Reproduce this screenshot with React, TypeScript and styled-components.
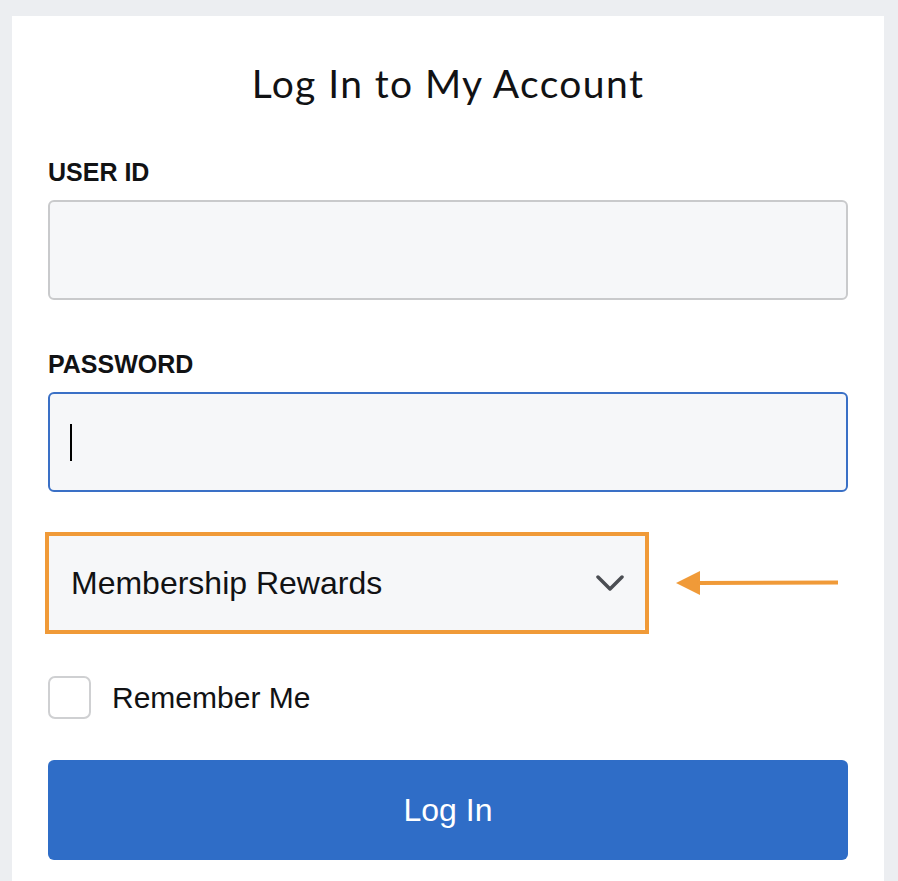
import styled, { createGlobalStyle } from 'styled-components';

const GlobalStyle = createGlobalStyle`
   html, body {
      margin: 0;
      padding: 0;
      background: #eceef1;
      overflow: hidden;
   }
   * {
      box-sizing: border-box;
   }
`;

const color = {
   text: '#111214',
   field: '#f6f7f9',
   fieldBorder: '#c9cacc',
   focus: '#3a70c6',
   button: '#2f6dc7',
   orange: '#f09a38',
   chevron: '#4b4e53',
};

const sans = `"Liberation Sans", Arial, Helvetica, sans-serif`;

const Page = styled.div`
   padding: 16px 14px 0 12px;
   min-height: 881px;
`;

const Card = styled.main`
   background: #ffffff;
   min-height: 865px;
   padding: 43px 36px 40px;
   display: flex;
   flex-direction: column;
`;

const Title = styled.h1`
   margin: 0;
   font-family: Lato, "Open Sans", sans-serif;
   font-weight: 400;
   font-size: 39px;
   letter-spacing: 1.4px;
   line-height: 48px;
   text-align: center;
   color: ${color.text};
`;

const Label = styled.label<{ $top: number }>`
   display: block;
   margin-top: ${(p) => p.$top}px;
   margin-bottom: 13px;
   font-family: ${sans};
   font-weight: 700;
   font-size: 25px;
   line-height: 30px;
   color: ${color.text};
`;

const Field = styled.div<{ $focused?: boolean }>`
   height: 100px;
   border-radius: 6px;
   background: ${color.field};
   border: 2px solid ${(p) => (p.$focused ? color.focus : color.fieldBorder)};
   display: flex;
   align-items: center;
   padding-left: 20px;
`;

const Caret = styled.span`
   width: 2px;
   height: 37px;
   background: #000;
`;

const SelectRow = styled.div`
   margin-top: 40px;
   display: flex;
   align-items: center;
   gap: 27px;
`;

const Highlight = styled.div`
   margin-left: -3px;
   width: 604px;
   height: 102px;
   border: 4px solid ${color.orange};
`;

const Select = styled.div`
   height: 100%;
   background: ${color.field};
   border-radius: 0 0 4px 0;
   display: flex;
   align-items: center;
   justify-content: space-between;
   padding: 0 21px 0 22px;
   font-family: ${sans};
   font-size: 32px;
   color: ${color.text};
`;

const CheckRow = styled.div`
   margin-top: 42px;
   display: flex;
   align-items: center;
   gap: 21px;
   font-family: ${sans};
   font-size: 30px;
   color: ${color.text};
`;

const Checkbox = styled.span`
   width: 43px;
   height: 43px;
   border: 2px solid #cfd0d2;
   border-radius: 7px;
   background: #fff;
`;

const Button = styled.button`
   margin-top: 41px;
   height: 100px;
   width: 100%;
   border: none;
   border-radius: 6px;
   background: ${color.button};
   color: #ffffff;
   font-family: ${sans};
   font-size: 32px;
   cursor: pointer;
`;

function Chevron() {
   return (
      <svg width="28" height="18" viewBox="0 0 28 18">
         <path
            d="M2 3 L14 15 L26 3"
            fill="none"
            stroke={color.chevron}
            strokeWidth="3.5"
            strokeLinecap="round"
            strokeLinejoin="round"
         />
      </svg>
   );
}

function Arrow() {
   return (
      <svg width="162" height="26" viewBox="0 0 162 26">
         <path d="M0 13 L24 1 L24 25 Z" fill={color.orange} />
         <line x1="22" y1="13" x2="162" y2="12.5" stroke={color.orange} strokeWidth="4" />
      </svg>
   );
}

export default function App() {
   return (
      <Page>
         <GlobalStyle />
         <Card>
            <Title>Log In to My Account</Title>

            <Label $top={50}>USER ID</Label>
            <Field />

            <Label $top={49}>PASSWORD</Label>
            <Field $focused>
               <Caret />
            </Field>

            <SelectRow>
               <Highlight>
                  <Select>
                     Membership Rewards
                     <Chevron />
                  </Select>
               </Highlight>
               <Arrow />
            </SelectRow>

            <CheckRow>
               <Checkbox />
               Remember Me
            </CheckRow>

            <Button>Log In</Button>
         </Card>
      </Page>
   );
}
